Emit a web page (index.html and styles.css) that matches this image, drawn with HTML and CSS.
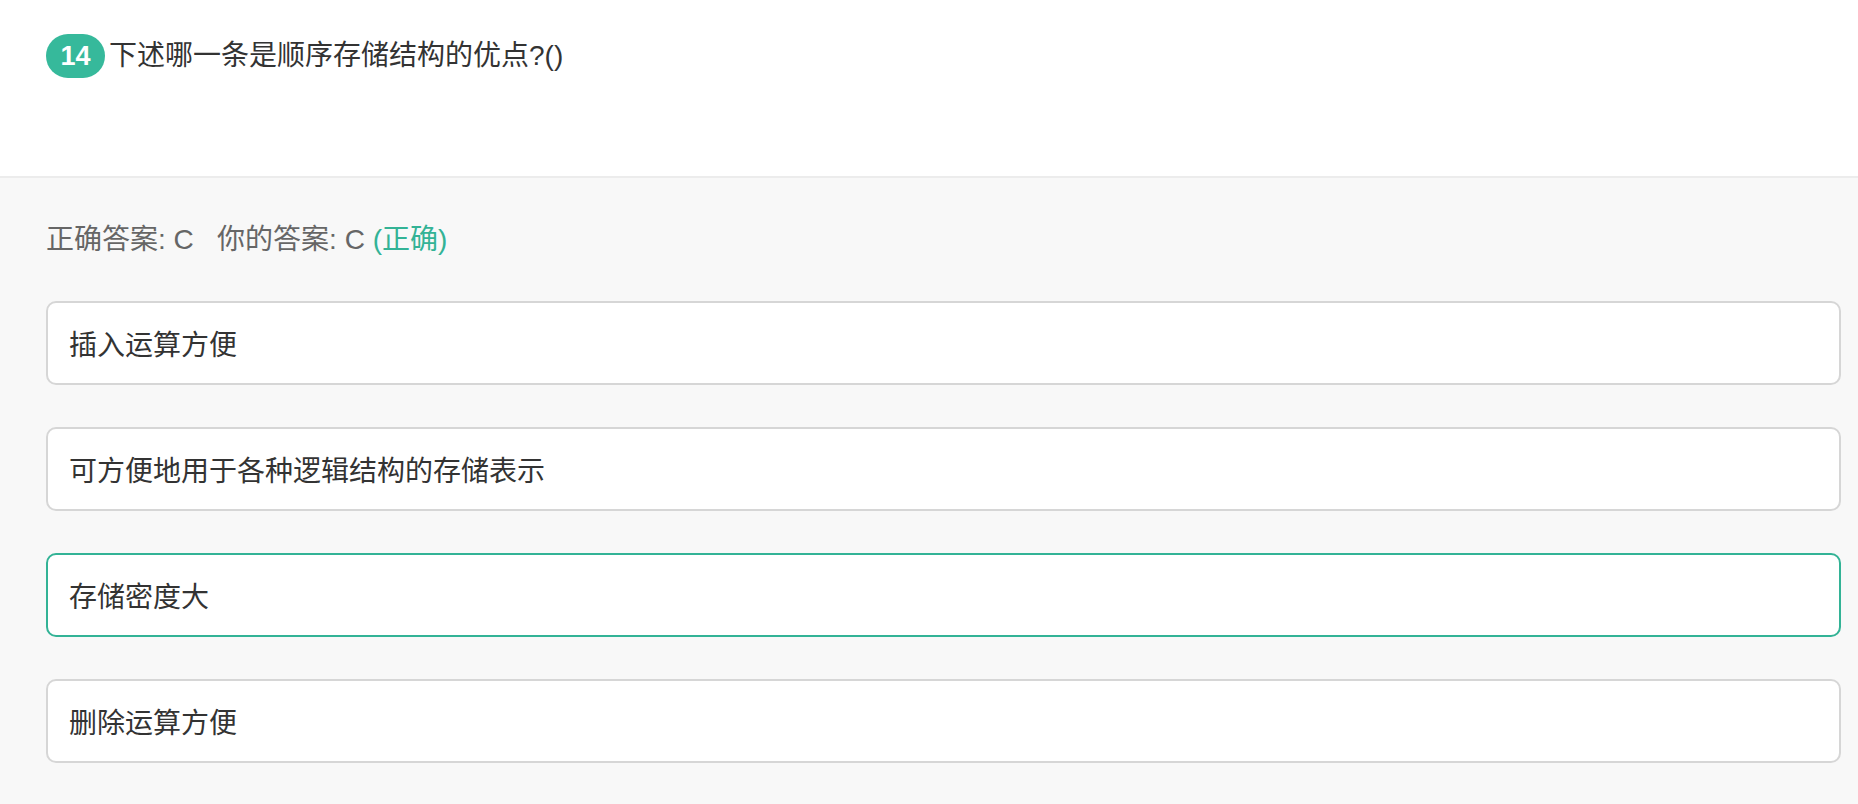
FILE: index.html
```html
<!DOCTYPE html>
<html lang="zh-CN">
<head>
<meta charset="utf-8">
<title>下述哪一条是顺序存储结构的优点</title>
<link rel="stylesheet" href="styles.css">
</head>
<body>
<div class="page">
  <div class="question">
    <span class="badge">14</span><span class="q-text">下述哪一条是顺序存储结构的优点?()</span>
  </div>
  <div class="answers">
    <div class="result">正确答案: C&nbsp;&nbsp;&nbsp;你的答案: C <span class="ok">(正确)</span></div>
    <div class="options">
      <div class="option">插入运算方便</div>
      <div class="option">可方便地用于各种逻辑结构的存储表示</div>
      <div class="option selected">存储密度大</div>
      <div class="option">删除运算方便</div>
    </div>
  </div>
</div>
</body>
</html>
```
FILE: styles.css
```css
html, body {
  margin: 0;
  padding: 0;
  background: #f8f8f8;
}
body {
  font-family: "Liberation Sans", "Noto Sans CJK SC", sans-serif;
  font-size: 28px;
  color: #333;
}
.page {
  min-height: 804px;
}
.question {
  background: #fff;
  height: 178px;
  box-sizing: border-box;
  padding: 34px 17px 0 46px;
  border-bottom: 2px solid #ececec;
  display: flex;
  align-items: flex-start;
}
.badge {
  display: inline-flex;
  align-items: center;
  justify-content: center;
  width: 59px;
  height: 44px;
  border-radius: 22px;
  background: #36b99b;
  color: #fff;
  font-weight: bold;
  font-size: 27px;
  margin-right: 4px;
  flex: none;
}
.q-text {
  line-height: 44px;
  color: #333;
}
.answers {
  padding: 42px 17px 39px 46px;
}
.result {
  line-height: 40px;
  color: #666;
  margin-bottom: 41px;
}
.ok {
  color: #33b396;
}
.options {
  display: flex;
  flex-direction: column;
  gap: 42px;
}
.option {
  height: 84px;
  box-sizing: border-box;
  border: 2px solid #d6d6d6;
  border-radius: 10px;
  background: #fff;
  display: flex;
  align-items: center;
  padding-left: 21px;
  color: #333;
}
.option.selected {
  border-color: #33b396;
}
```
